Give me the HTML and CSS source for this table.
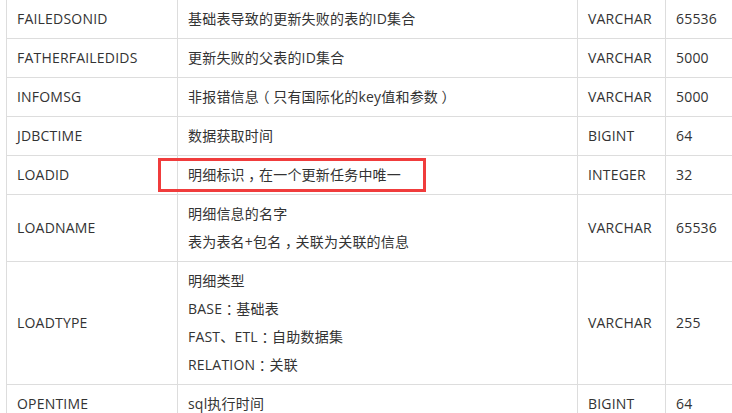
FILE: index.html
```html
<!DOCTYPE html>
<html lang="zh-CN">
<head>
<meta charset="utf-8">
<title>字段说明</title>
<link rel="stylesheet" href="styles.css">
</head>
<body>
<div class="table">
  <div class="cell">FAILEDSONID</div>
  <div class="cell">基础表导致的更新失败的表的ID集合</div>
  <div class="cell">VARCHAR</div>
  <div class="cell last">65536</div>

  <div class="cell">FATHERFAILEDIDS</div>
  <div class="cell">更新失败的父表的ID集合</div>
  <div class="cell">VARCHAR</div>
  <div class="cell last">5000</div>

  <div class="cell">INFOMSG</div>
  <div class="cell"><p>非报错信息<span class="pc">（</span>只有国际化的key值和参数<span class="pc">）</span></p></div>
  <div class="cell">VARCHAR</div>
  <div class="cell last">5000</div>

  <div class="cell">JDBCTIME</div>
  <div class="cell">数据获取时间</div>
  <div class="cell">BIGINT</div>
  <div class="cell last">64</div>

  <div class="cell">LOADID</div>
  <div class="cell"><p>明细标识<span class="pc">，</span>在一个更新任务中唯一</p></div>
  <div class="cell">INTEGER</div>
  <div class="cell last">32</div>

  <div class="cell">LOADNAME</div>
  <div class="cell"><p>明细信息的名字</p><p>表为表名+包名<span class="pc">，</span>关联为关联的信息</p></div>
  <div class="cell">VARCHAR</div>
  <div class="cell last">65536</div>

  <div class="cell">LOADTYPE</div>
  <div class="cell"><p>明细类型</p><p>BASE<span class="pc">：</span>基础表</p><p>FAST、ETL<span class="pc">：</span>自助数据集</p><p>RELATION<span class="pc">：</span>关联</p></div>
  <div class="cell">VARCHAR</div>
  <div class="cell last">255</div>

  <div class="cell">OPENTIME</div>
  <div class="cell">sql执行时间</div>
  <div class="cell">BIGINT</div>
  <div class="cell last">64</div>

  <div class="highlight"></div>
</div>
</body>
</html>
```
FILE: styles.css
```css
html, body {
  margin: 0;
  padding: 0;
  background: #ffffff;
  overflow: hidden;
}

body {
  width: 732px;
  height: 413px;
}

.table {
  position: relative;
  display: grid;
  grid-template-columns: 171px 400px 88px 66px;
  width: max-content;
  margin-left: 6px;
  border-left: 1px solid #dddddd;
  font-family: "Open Sans", "Noto Sans CJK SC", sans-serif;
  font-size: 14px;
  letter-spacing: 0.2px;
  color: #333333;
}

.cell {
  box-sizing: border-box;
  display: flex;
  flex-direction: column;
  justify-content: center;
  padding: 5px 10px;
  line-height: 28px;
  border-right: 1px solid #dddddd;
  border-bottom: 1px solid #dddddd;
  white-space: nowrap;
}

.cell.last {
  border-right: none;
}

.cell p {
  margin: 0;
}

/* full-width punctuation centred in its em box, as in the original font */
.pc {
  font-feature-settings: "halt" 1;
  padding: 0 0.25em;
}

.highlight {
  position: absolute;
  left: 151px;
  top: 158px;
  width: 268px;
  height: 34px;
  box-sizing: border-box;
  border: 3px solid #f03c3c;
  pointer-events: none;
}
```
